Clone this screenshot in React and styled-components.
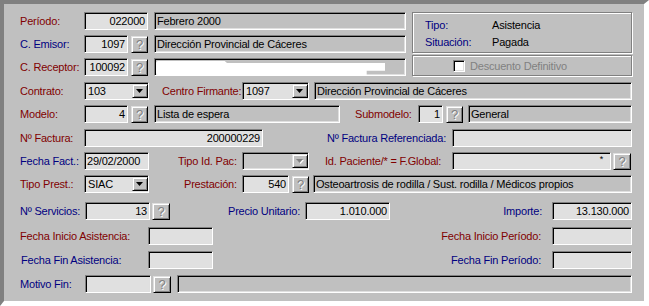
import React from 'react';
import styled, { createGlobalStyle, css } from 'styled-components';

const GlobalStyle = createGlobalStyle`
  html, body { margin: 0; padding: 0; background: #ffffff; }
  #root { width: 649px; height: 306px; }
`;

const COLORS = { red: '#800000', blue: '#000080' };

const sunken = css`
  border: 1px solid;
  border-color: #808080 #ffffff #ffffff #808080;
  box-shadow: inset 1px 1px #000000, inset -1px -1px #dfdfdf;
`;

const raised = css`
  border: 1px solid;
  border-color: #dfdfdf #000000 #000000 #dfdfdf;
  box-shadow: inset 1px 1px #ffffff, inset -1px -1px #808080;
  background: #c0c0c0;
`;

const Window = styled.div`
  box-sizing: border-box;
  width: 649px;
  height: 306px;
  border-style: solid;
  border-width: 4px 5px 5px 4px;
  border-color: #808080 #ffffff #ffffff #808080;
  background: #c0c0c0;
  padding: 8px 12px 0 16px;
  font-family: "Liberation Sans", Arial, sans-serif;
  font-size: 11px;
  letter-spacing: -0.2px;
  color: #000000;
`;

const Top = styled.div`
  display: flex;
  align-items: flex-start;
`;

const LeftCol = styled.div`
  width: 386px;
  display: flex;
  flex-direction: column;
  gap: 5px;
`;

const RightCol = styled.div`
  width: 220px;
  margin-left: 6px;
  display: flex;
  flex-direction: column;
  gap: 2px;
`;

const etched = css`
  box-sizing: border-box;
  border: 1px solid #808080;
  box-shadow: inset 1px 1px #ffffff, 1px 1px #ffffff;
`;

const Group = styled.div`
  ${etched};
  height: 41px;
  padding: 3px 0 0 12px;
  display: grid;
  grid-template-columns: 67px auto;
  grid-auto-rows: 17px;
  align-items: center;
`;

const InfoLabel = styled.span`
  color: #000080;
`;

const CheckFrame = styled.div`
  ${etched};
  height: 21px;
  padding-left: 40px;
  display: flex;
  align-items: center;
  gap: 5px;
  color: #808080;
`;

const CheckBox = styled.span`
  box-sizing: border-box;
  width: 12px;
  height: 12px;
  background: #ffffff;
  ${sunken};
`;

const Row = styled.div`
  display: flex;
  align-items: center;
  height: 18px;
  margin-top: ${p => p.$mt || 0}px;
`;

const Label = styled.span`
  box-sizing: border-box;
  flex-shrink: 0;
  width: ${p => p.$w}px;
  margin-left: ${p => p.$ml || 0}px;
  padding-right: ${p => p.$pr || 0}px;
  text-align: ${p => (p.$right ? 'right' : 'left')};
  color: ${p => COLORS[p.$c]};
  white-space: nowrap;
`;

const Input = styled.div`
  box-sizing: border-box;
  flex-shrink: 0;
  ${sunken};
  width: ${p => p.$w}px;
  height: 18px;
  margin-left: ${p => p.$ml || 0}px;
  background: #e0e0e0;
  display: flex;
  align-items: center;
  justify-content: ${p => (p.$left ? 'flex-start' : 'flex-end')};
  padding: 0 2px;
  white-space: nowrap;
  overflow: hidden;
`;

const Desc = styled(Input)`
  background: #c0c0c0;
  justify-content: flex-start;
  padding: 0 2px 0 ${p => (p.$pl != null ? p.$pl : 2)}px;
`;

const Star = styled.span`
  font-size: 9px;
  margin: -4px 5px 0 0;
`;

const Redaction = styled.span`
  display: block;
  width: 229px;
  height: 14px;
  margin-top: 2px;
  background: #ffffff;
  border-radius: 2px;
  clip-path: polygon(0 0, 30% 0, 31% 15%, 100% 15%, 100% 70%, 92% 70%, 92% 100%, 0 100%);
`;

const SelectBox = styled(Input)`
  background: ${p => (p.$disabled ? '#c8c8c8' : '#e0e0e0')};
  justify-content: space-between;
  padding: 0 0 0 3px;
`;

const DropBtn = styled.span`
  box-sizing: border-box;
  ${raised};
  width: 16px;
  height: 14px;
  display: flex;
  align-items: center;
  justify-content: center;
`;

const QBtn = styled.span`
  box-sizing: border-box;
  flex-shrink: 0;
  ${raised};
  width: ${p => p.$w || 17}px;
  height: 17px;
  margin-left: ${p => p.$ml || 0}px;
  display: flex;
  align-items: center;
  justify-content: center;
  font-size: 13px;
  color: #808080;
  text-shadow: 1px 1px #ffffff;
  line-height: 1;
`;

const Arrow = ({ disabled }) => (
  <svg width="8" height="5" viewBox="0 0 8 5">
    {disabled && <polygon points="1,1 8,1 4.5,5" fill="#ffffff" />}
    <polygon points="0,0 7,0 3.5,4" fill={disabled ? '#808080' : '#000000'} />
  </svg>
);

const Select = ({ w, ml, value, disabled }) => (
  <SelectBox $w={w} $ml={ml} $disabled={disabled}>
    <span>{value}</span>
    <DropBtn>
      <Arrow disabled={disabled} />
    </DropBtn>
  </SelectBox>
);

const Q = props => <QBtn {...props}>?</QBtn>;

export default function App() {
  return (
    <>
      <GlobalStyle />
      <Window>
        <Top>
          <LeftCol>
            <Row>
              <Label $w={64} $c="red">Período:</Label>
              <Input $w={64}>022000</Input>
              <Desc $w={252} $ml={6}>Febrero 2000</Desc>
            </Row>
            <Row>
              <Label $w={64} $c="blue">C. Emisor:</Label>
              <Input $w={44}>1097</Input>
              <Q $ml={3} />
              <Desc $w={252} $ml={6}>Dirección Provincial de Cáceres</Desc>
            </Row>
            <Row>
              <Label $w={64} $c="red">C. Receptor:</Label>
              <Input $w={44}>100092</Input>
              <Q $ml={3} />
              <Desc $w={252} $ml={6} $pl={1}>
                <Redaction />
              </Desc>
            </Row>
          </LeftCol>
          <RightCol>
            <Group>
              <InfoLabel>Tipo:</InfoLabel>
              <span>Asistencia</span>
              <InfoLabel>Situación:</InfoLabel>
              <span>Pagada</span>
            </Group>
            <CheckFrame>
              <CheckBox />
              <span>Descuento Definitivo</span>
            </CheckFrame>
          </RightCol>
        </Top>

        <Row $mt={6}>
          <Label $w={64} $c="red">Contrato:</Label>
          <Select w={65} value="103" />
          <Label $w={80} $ml={13} $c="red">Centro Firmante:</Label>
          <Select w={67} value="1097" />
          <Desc $w={318} $ml={5}>Dirección Provincial de Cáceres</Desc>
        </Row>

        <Row $mt={5}>
          <Label $w={64} $c="red">Modelo:</Label>
          <Input $w={44}>4</Input>
          <Q $ml={3} />
          <Desc $w={186} $ml={6}>Lista de espera</Desc>
          <Label $w={63} $ml={15} $c="red">Submodelo:</Label>
          <Input $w={25}>1</Input>
          <Q $ml={3} />
          <Desc $w={164} $ml={5}>General</Desc>
        </Row>

        <Row $mt={6}>
          <Label $w={64} $c="red">Nº Factura:</Label>
          <Input $w={179}>200000229</Input>
          <Label $w={125} $ml={64} $c="blue">Nº Factura Referenciada:</Label>
          <Input $w={180} />
        </Row>

        <Row $mt={5}>
          <Label $w={64} $c="blue">Fecha Fact.:</Label>
          <Input $w={65} $left>29/02/2000</Input>
          <Label $w={64} $ml={29} $c="red">Tipo Id. Pac:</Label>
          <Select w={67} value="" disabled />
          <Label $w={127} $ml={16} $c="red">Id. Paciente/* = F.Global:</Label>
          <Input $w={159}><Star>*</Star></Input>
          <Q $ml={2} $w={18} />
        </Row>

        <Row $mt={5}>
          <Label $w={64} $c="red">Tipo Prest.:</Label>
          <Select w={65} value="SIAC" />
          <Label $w={58} $ml={35} $c="red">Prestación:</Label>
          <Input $w={47}>540</Input>
          <Q $ml={3} />
          <Desc $w={319} $ml={4}>Osteoartrosis de rodilla / Sust. rodilla / Médicos propios</Desc>
        </Row>

        <Row $mt={9}>
          <Label $w={65} $c="blue">Nº Servicios:</Label>
          <Input $w={65}>13</Input>
          <Q $ml={2} $w={18} />
          <Label $w={77} $ml={58} $c="blue">Precio Unitario:</Label>
          <Input $w={85}>1.010.000</Input>
          <Label $w={162} $pr={10} $right $c="blue">Importe:</Label>
          <Input $w={80}>13.130.000</Input>
        </Row>

        <Row $mt={7}>
          <Label $w={128} $c="red">Fecha Inicio Asistencia:</Label>
          <Input $w={65} />
          <Label $w={339} $pr={11} $right $c="red">Fecha Inicio Período:</Label>
          <Input $w={80} />
        </Row>

        <Row $mt={6}>
          <Label $w={127} $ml={1} $c="blue">Fecha Fin Asistencia:</Label>
          <Input $w={65} />
          <Label $w={339} $pr={11} $right $c="blue">Fecha Fin Período:</Label>
          <Input $w={80} />
        </Row>

        <Row $mt={6}>
          <Label $w={65} $c="blue">Motivo Fin:</Label>
          <Input $w={66} />
          <Q $ml={2} $w={18} />
          <Desc $w={455} $ml={6} />
        </Row>
      </Window>
    </>
  );
}
